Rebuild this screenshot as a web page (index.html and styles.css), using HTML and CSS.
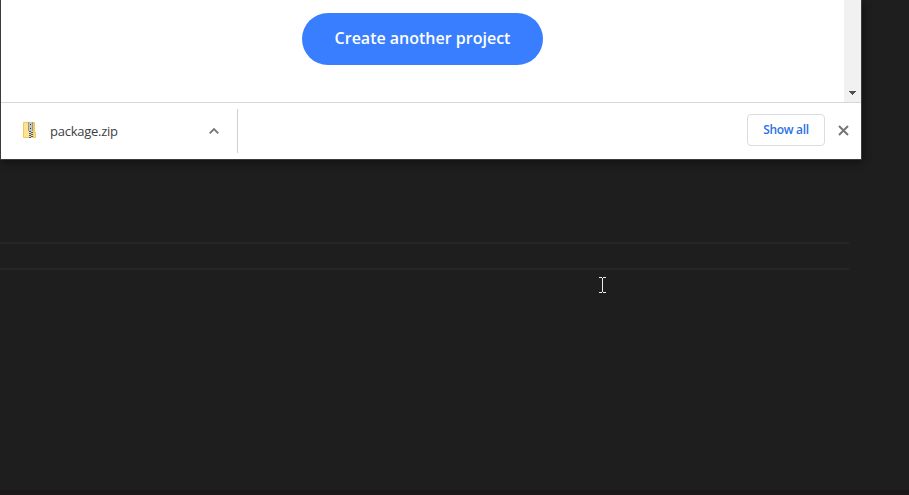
FILE: index.html
```html
<!DOCTYPE html>
<html lang="en">
<head>
<meta charset="utf-8">
<title>Downloads</title>
<link rel="stylesheet" href="styles.css">
</head>
<body>
<div class="desktop">
  <section class="browser">
    <div class="viewport">
      <main class="page"><button class="create">Create another project</button></main>
      <div class="scrollbar"><svg width="7" height="4" viewBox="0 0 7 4" shape-rendering="crispEdges"><path d="M0 0h7v1H6v1H5v1H4v1H3V3H2V2H1V1H0z" fill="#505050"/></svg></div>
    </div>
    <footer class="shelf">
      <div class="item">
        <svg class="zip" width="13" height="17" viewBox="0 0 13 17">
          <path d="M.5.5h11v10h1v5H.5z" fill="#ffe391" stroke="#edc957"/>
          <path d="M10.5 1v14" stroke="#f0cf62"/>
          <path d="M5 0h5v9H5z" fill="#c4c4c0"/>
          <path d="M5.5 0v9M9.5 0v9" stroke="#96968f"/>
          <path d="M7 2h1v1H7zm0 4h1v1H7z" fill="#333"/>
          <path d="M6 9h4v7H6z" fill="#ddd"/>
          <path d="M6 9h2v1H6zm2 1h2v1H8zm-2 1h2v1H6zm2 1h2v1H8zm-2 1h2v1H6zm2 1h2v1H8zm-2 1h2v1H6z" fill="#55584f"/>
        </svg>
        <span class="filename">package.zip</span>
        <svg class="chevron" width="10" height="6" viewBox="0 0 10 6"><path d="M.7 5.3 5 1l4.3 4.3" fill="none" stroke="#74777a" stroke-width="1.8"/></svg>
      </div>
      <button class="show">Show all</button>
      <svg class="close" width="11" height="11" viewBox="0 0 11 11"><path d="m1 1 9 9m0-9-9 9" stroke="#74777a" stroke-width="2"/></svg>
    </footer>
  </section>
  <div class="line-highlight"></div>
  <div class="statusbar"></div>
  <svg class="cursor" width="7" height="16" viewBox="0 0 7 16" shape-rendering="crispEdges"><path d="M0 0h3v1h1V0h3v1H4v14h3v1H4v-1H3v1H0v-1h3V1H0z" fill="#eee"/></svg>
</div>
</body>
</html>
```
FILE: styles.css
```css
* { box-sizing: border-box; }
body { margin: 0; background: #1e1e1e; }
.desktop { position: relative; display: flex; flex-direction: column; height: 495px; overflow: hidden; }
.browser { width: 862px; height: 160px; flex: none; border: solid #3b3b3b; border-width: 0 1px 1px; background: #fff; box-shadow: 1px 3px 8px rgba(0,0,0,.4); }
.viewport { display: flex; height: 102px; }
.page { flex: 1; display: flex; justify-content: center; align-items: flex-start; padding-top: 13px; }
.create { width: 241px; height: 52px; border: 0; border-radius: 26px; padding: 0 0 2px; background: #387eff; color: #fff; font: 600 16px "Open Sans", sans-serif; }
.scrollbar { width: 17px; background: #f1f1f1; display: flex; justify-content: center; align-items: flex-end; padding-bottom: 7px; }
.shelf { height: 57px; border-top: 1px solid #d5d6d8; display: flex; align-items: center; padding-right: 13px; }
.item { width: 237px; height: 44px; border-right: 1px solid #cfcfcf; display: flex; align-items: center; padding: 0 18px 0 22px; }
.zip { margin-top: -2px; }
.filename { margin-left: 14px; font: 13px "Open Sans", sans-serif; letter-spacing: -.25px; color: #3c4043; }
.chevron { margin-left: auto; }
.show { width: 78px; height: 32px; margin-left: auto; margin-top: -2px; border: 1px solid #dadce0; border-radius: 4px; padding: 0 0 2px; background: #fff; color: #2a72e8; font: 600 12px "Open Sans", sans-serif; letter-spacing: -.3px; }
.close { margin: -2px -1px 0 13px; }
.line-highlight { width: 849px; height: 28px; margin-top: 82px; border: solid #262626; border-width: 2px 0; }
.statusbar { height: 5px; margin-top: auto; background: #1c181a; }
.cursor { position: absolute; left: 599px; top: 277px; }
```
